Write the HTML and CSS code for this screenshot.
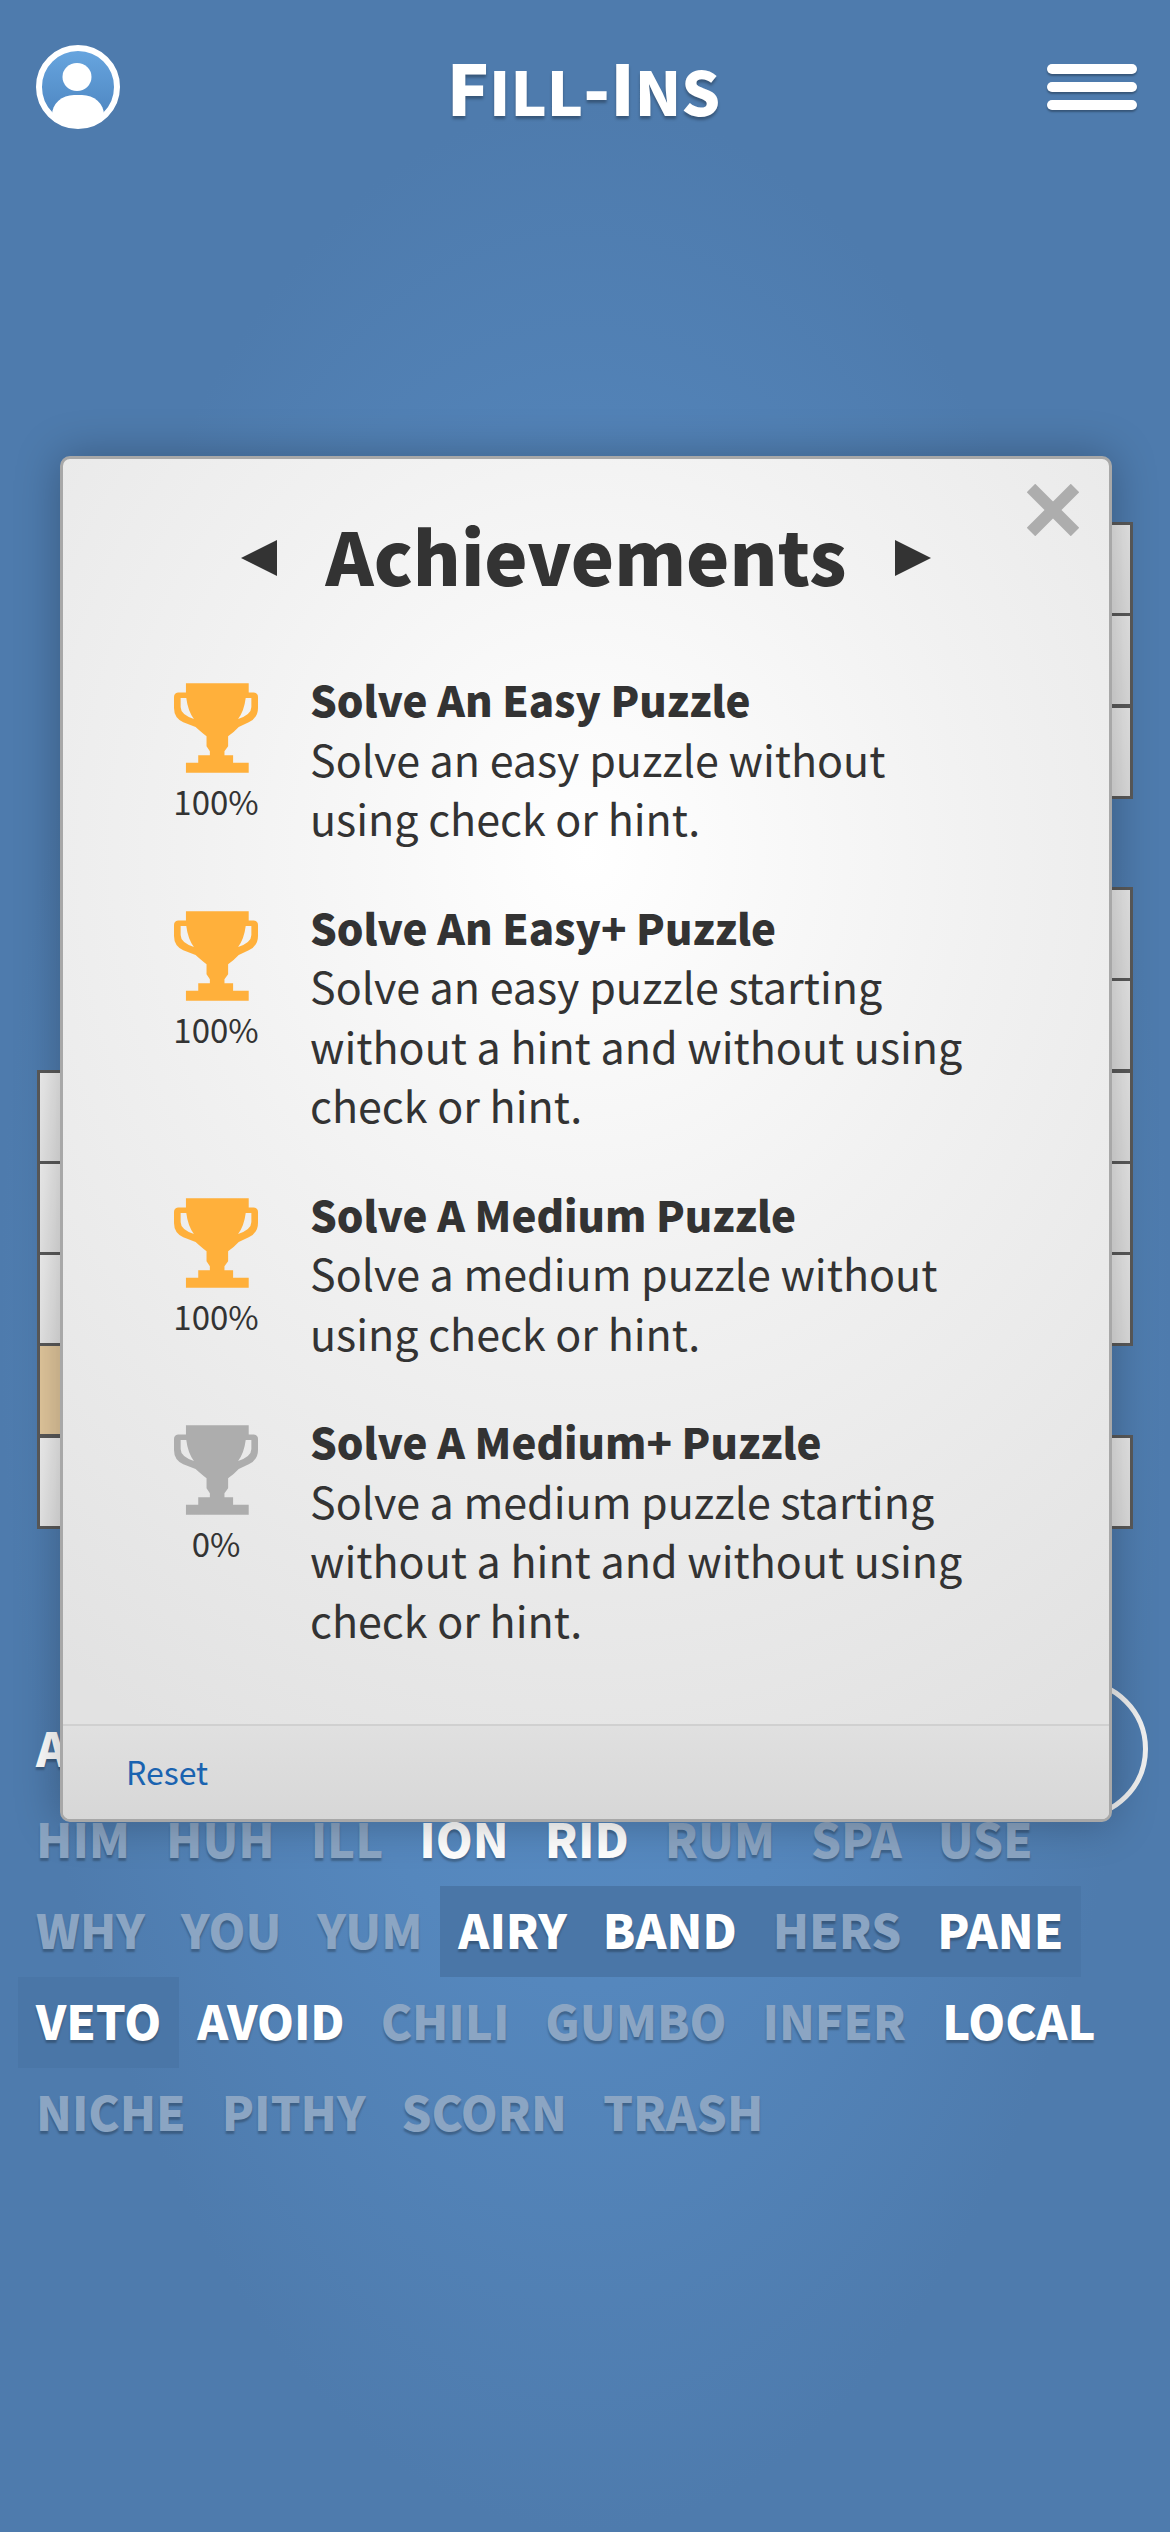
FILE: index.html
```html
<!DOCTYPE html>
<html lang="en">
<head>
  <meta charset="UTF-8">
  <meta name="viewport" content="width=device-width, initial-scale=1.0">
  <title>Fill-Ins</title>
  <link rel="stylesheet" href="styles.css">
</head>
<body>

<svg class="defs" width="0" height="0">
  <symbol id="trophy" viewBox="0 0 253 270">
    <path fill-rule="evenodd" d="M36 0H225V28H240Q253 30 253 42V75Q253 105 225 118L195 132Q178 150 163 160V190L152 205V217H178V240H225V270H36V240H73V217H108V205L98 190V160Q85 150 65 132L28 118Q0 105 0 75V42Q0 30 12 28H36ZM20 45V72Q20 95 60 108Q42 85 37 45ZM233 45H216Q211 85 193 108Q233 95 233 72Z"/>
  </symbol>
</svg>

<!-- Top bar -->
<header class="topbar">
  <svg class="avatar" viewBox="0 0 84 84">
    <defs>
      <linearGradient id="avatar-bg" x1="0" y1="0" x2="0" y2="1">
        <stop offset="0" stop-color="#68a6e0"/>
        <stop offset="1" stop-color="#4a82bd"/>
      </linearGradient>
      <clipPath id="avatar-clip"><circle cx="42" cy="42" r="37"/></clipPath>
    </defs>
    <circle cx="42" cy="42" r="39" fill="url(#avatar-bg)" stroke="#fff" stroke-width="6"/>
    <g clip-path="url(#avatar-clip)" fill="#fff">
      <ellipse cx="41" cy="32" rx="14.5" ry="14"/>
      <rect x="16" y="50" width="52" height="40" rx="22"/>
    </g>
  </svg>
  <h1 class="logo">F<span class="logo-small">ill</span>-I<span class="logo-small">ns</span></h1>
  <div class="menu-btn">
    <div class="menu-bar"></div>
    <div class="menu-bar"></div>
    <div class="menu-bar"></div>
  </div>
</header>

<!-- Puzzle board, mostly hidden by the dialog -->
<div class="board">
  <div class="board-row"><div class="cell cell-right"></div></div>
  <div class="board-row"><div class="cell cell-right"></div></div>
  <div class="board-row"><div class="cell cell-right"></div></div>
  <div class="board-row"></div>
  <div class="board-row"><div class="cell cell-right"></div></div>
  <div class="board-row"><div class="cell cell-right"></div></div>
  <div class="board-row"><div class="cell"></div><div class="cell cell-right"></div></div>
  <div class="board-row"><div class="cell"></div><div class="cell cell-right"></div></div>
  <div class="board-row"><div class="cell"></div><div class="cell cell-right"></div></div>
  <div class="board-row"><div class="cell cell-active"></div></div>
  <div class="board-row"><div class="cell"></div><div class="cell cell-right"></div></div>
</div>

<!-- Word bank -->
<div class="bank">
  <div class="bank-row">
    <span class="word">ACT</span>
    <div class="ring"></div>
  </div>
  <div class="bank-row">
    <span class="word word-used">HIM</span>
    <span class="word word-used">HUH</span>
    <span class="word word-used">ILL</span>
    <span class="word">ION</span>
    <span class="word">RID</span>
    <span class="word word-used">RUM</span>
    <span class="word word-used">SPA</span>
    <span class="word word-used">USE</span>
  </div>
  <div class="bank-row">
    <span class="word word-used">WHY</span>
    <span class="word word-used">YOU</span>
    <span class="word word-used">YUM</span>
    <span class="word word-on">AIRY</span>
    <span class="word word-on">BAND</span>
    <span class="word word-on word-used">HERS</span>
    <span class="word word-on">PANE</span>
  </div>
  <div class="bank-row">
    <span class="word word-on">VETO</span>
    <span class="word">AVOID</span>
    <span class="word word-used">CHILI</span>
    <span class="word word-used">GUMBO</span>
    <span class="word word-used">INFER</span>
    <span class="word">LOCAL</span>
  </div>
  <div class="bank-row">
    <span class="word word-used">NICHE</span>
    <span class="word word-used">PITHY</span>
    <span class="word word-used">SCORN</span>
    <span class="word word-used">TRASH</span>
  </div>
</div>

<!-- Achievements dialog -->
<div class="modal">
  <svg class="modal-close" viewBox="0 0 52 52">
    <path d="M4 4L48 48M48 4L4 48" fill="none" stroke="#adadad" stroke-width="12"/>
  </svg>
  <div class="modal-title">
    <svg class="arrow" viewBox="0 0 36 36"><polygon points="36,0 36,36 0,18"/></svg>
    <h2>Achievements</h2>
    <svg class="arrow" viewBox="0 0 36 36"><polygon points="0,0 0,36 36,18"/></svg>
  </div>

  <div class="achievement">
    <div class="award">
      <svg class="trophy"><use href="#trophy"/></svg>
      <div class="award-pct">100%</div>
    </div>
    <div class="achievement-text">
      <div class="achievement-name">Solve An Easy Puzzle</div>
      Solve an easy puzzle without<br>using check or hint.
    </div>
  </div>

  <div class="achievement">
    <div class="award">
      <svg class="trophy"><use href="#trophy"/></svg>
      <div class="award-pct">100%</div>
    </div>
    <div class="achievement-text">
      <div class="achievement-name">Solve An Easy+ Puzzle</div>
      Solve an easy puzzle starting<br>without a hint and without using<br>check or hint.
    </div>
  </div>

  <div class="achievement">
    <div class="award">
      <svg class="trophy"><use href="#trophy"/></svg>
      <div class="award-pct">100%</div>
    </div>
    <div class="achievement-text">
      <div class="achievement-name">Solve A Medium Puzzle</div>
      Solve a medium puzzle without<br>using check or hint.
    </div>
  </div>

  <div class="achievement">
    <div class="award">
      <svg class="trophy trophy-locked"><use href="#trophy"/></svg>
      <div class="award-pct">0%</div>
    </div>
    <div class="achievement-text">
      <div class="achievement-name">Solve A Medium+ Puzzle</div>
      Solve a medium puzzle starting<br>without a hint and without using<br>check or hint.
    </div>
  </div>

  <div class="modal-footer">
    <a class="reset">Reset</a>
  </div>
</div>

</body>
</html>
```
FILE: styles.css
```css
/* General styles */
body {
  position: relative;
  margin: 0;
  width: 1170px;
  height: 2532px;
  overflow: hidden;
  font-family: "Noto Sans CJK SC", "Noto Sans", sans-serif;
  color: #333;
  background: radial-gradient(closest-side at 50% 52%, #5a90ca 0%, #5587bd 55%, #4e7bad 100%);
}

.defs {
  position: absolute;
}

/* Top bar */
.topbar {
  display: flex;
  align-items: center;
  justify-content: space-between;
  box-sizing: border-box;
  height: 174px;
  padding: 0 33px 0 36px;
}

.avatar {
  width: 84px;
  height: 84px;
}

.logo {
  margin: 2px 0 0 0;
  font-size: 70px;
  line-height: 90px;
  font-weight: 900;
  color: #fff;
  text-shadow: 0 3px 3px rgba(0, 0, 0, 0.3);
}

.logo-small {
  font-size: 61px;
  text-transform: uppercase;
}

.menu-btn {
  display: flex;
  flex-direction: column;
  gap: 8px;
  width: 90px;
}

.menu-bar {
  height: 10px;
  border-radius: 5px;
  background: #fff;
  box-shadow: 0 2px 2px rgba(0, 0, 0, 0.3);
}

/* Board */
.board {
  margin: 348px 37px 0 37px;
}

.board-row {
  display: flex;
  justify-content: space-between;
  height: 91.25px;
}

.cell {
  box-sizing: border-box;
  width: 91px;
  height: 94px;
  border: 3px solid #5a5a5a;
  background: linear-gradient(135deg, #f2f2f2, #dedede);
}

.cell-right {
  margin-left: auto;
}

.cell-active {
  background: #e4c99e;
}

/* Word bank */
.bank {
  margin: 178px 0 0 18px;
}

.bank-row {
  display: flex;
  align-items: center;
  height: 91px;
}

.word {
  padding: 0 18px 6px;
  font-size: 47px;
  line-height: 85px;
  font-weight: 900;
  color: #fff;
  text-shadow: 0 3px 2px rgba(0, 0, 0, 0.25);
}

.word-used {
  color: #8ba5c3;
}

.word-on {
  background: #4a76a7;
}

.ring {
  flex-shrink: 0;
  box-sizing: border-box;
  width: 140px;
  height: 140px;
  margin: 0 22px 0 auto;
  border: 5px solid #f0f0f0;
  border-radius: 50%;
}

/* Achievements dialog */
.modal {
  position: absolute;
  top: 456px;
  left: 60px;
  box-sizing: border-box;
  width: 1052px;
  border: 3px solid #a8a8a8;
  border-radius: 10px;
  background: radial-gradient(ellipse 900px 1000px at 50% 29%, #fff 0%, #f1f1f1 45%, #e2e2e2 100%);
  box-shadow: 0 0 45px rgba(0, 0, 0, 0.28);
}

.modal-close {
  position: absolute;
  top: 25px;
  right: 30px;
  width: 52px;
  height: 52px;
}

.modal-title {
  display: flex;
  align-items: center;
  justify-content: center;
  gap: 48px;
  height: 210px;
}

.modal-title h2 {
  margin: -21px 0 0 0;
  font-size: 73px;
  line-height: 90px;
  font-weight: 900;
}

.arrow {
  width: 36px;
  height: 36px;
  margin-top: -12px;
  fill: #333;
}

.achievement {
  display: flex;
  gap: 52px;
  margin-bottom: 49px;
  padding-left: 111px;
  font-size: 43px;
  line-height: 59.5px;
}

.award {
  width: 84px;
  padding-top: 14px;
  text-align: center;
}

.trophy {
  display: block;
  width: 84px;
  height: 90px;
  fill: #ffb03b;
}

.trophy-locked {
  fill: #adadad;
}

.award-pct {
  margin: 3px -10px 0;
  font-size: 33px;
  line-height: 50px;
}

.achievement-name {
  font-size: 42px;
  font-weight: 900;
}

.modal-footer {
  margin-top: 75px;
  padding-left: 63px;
  height: 93px;
  border-top: 2px solid #d0d0d0;
  border-radius: 0 0 7px 7px;
  background: linear-gradient(#e0e0e0, #d7d7d7);
  line-height: 90px;
}

.reset {
  font-size: 32px;
  color: #1a63b0;
}
```
